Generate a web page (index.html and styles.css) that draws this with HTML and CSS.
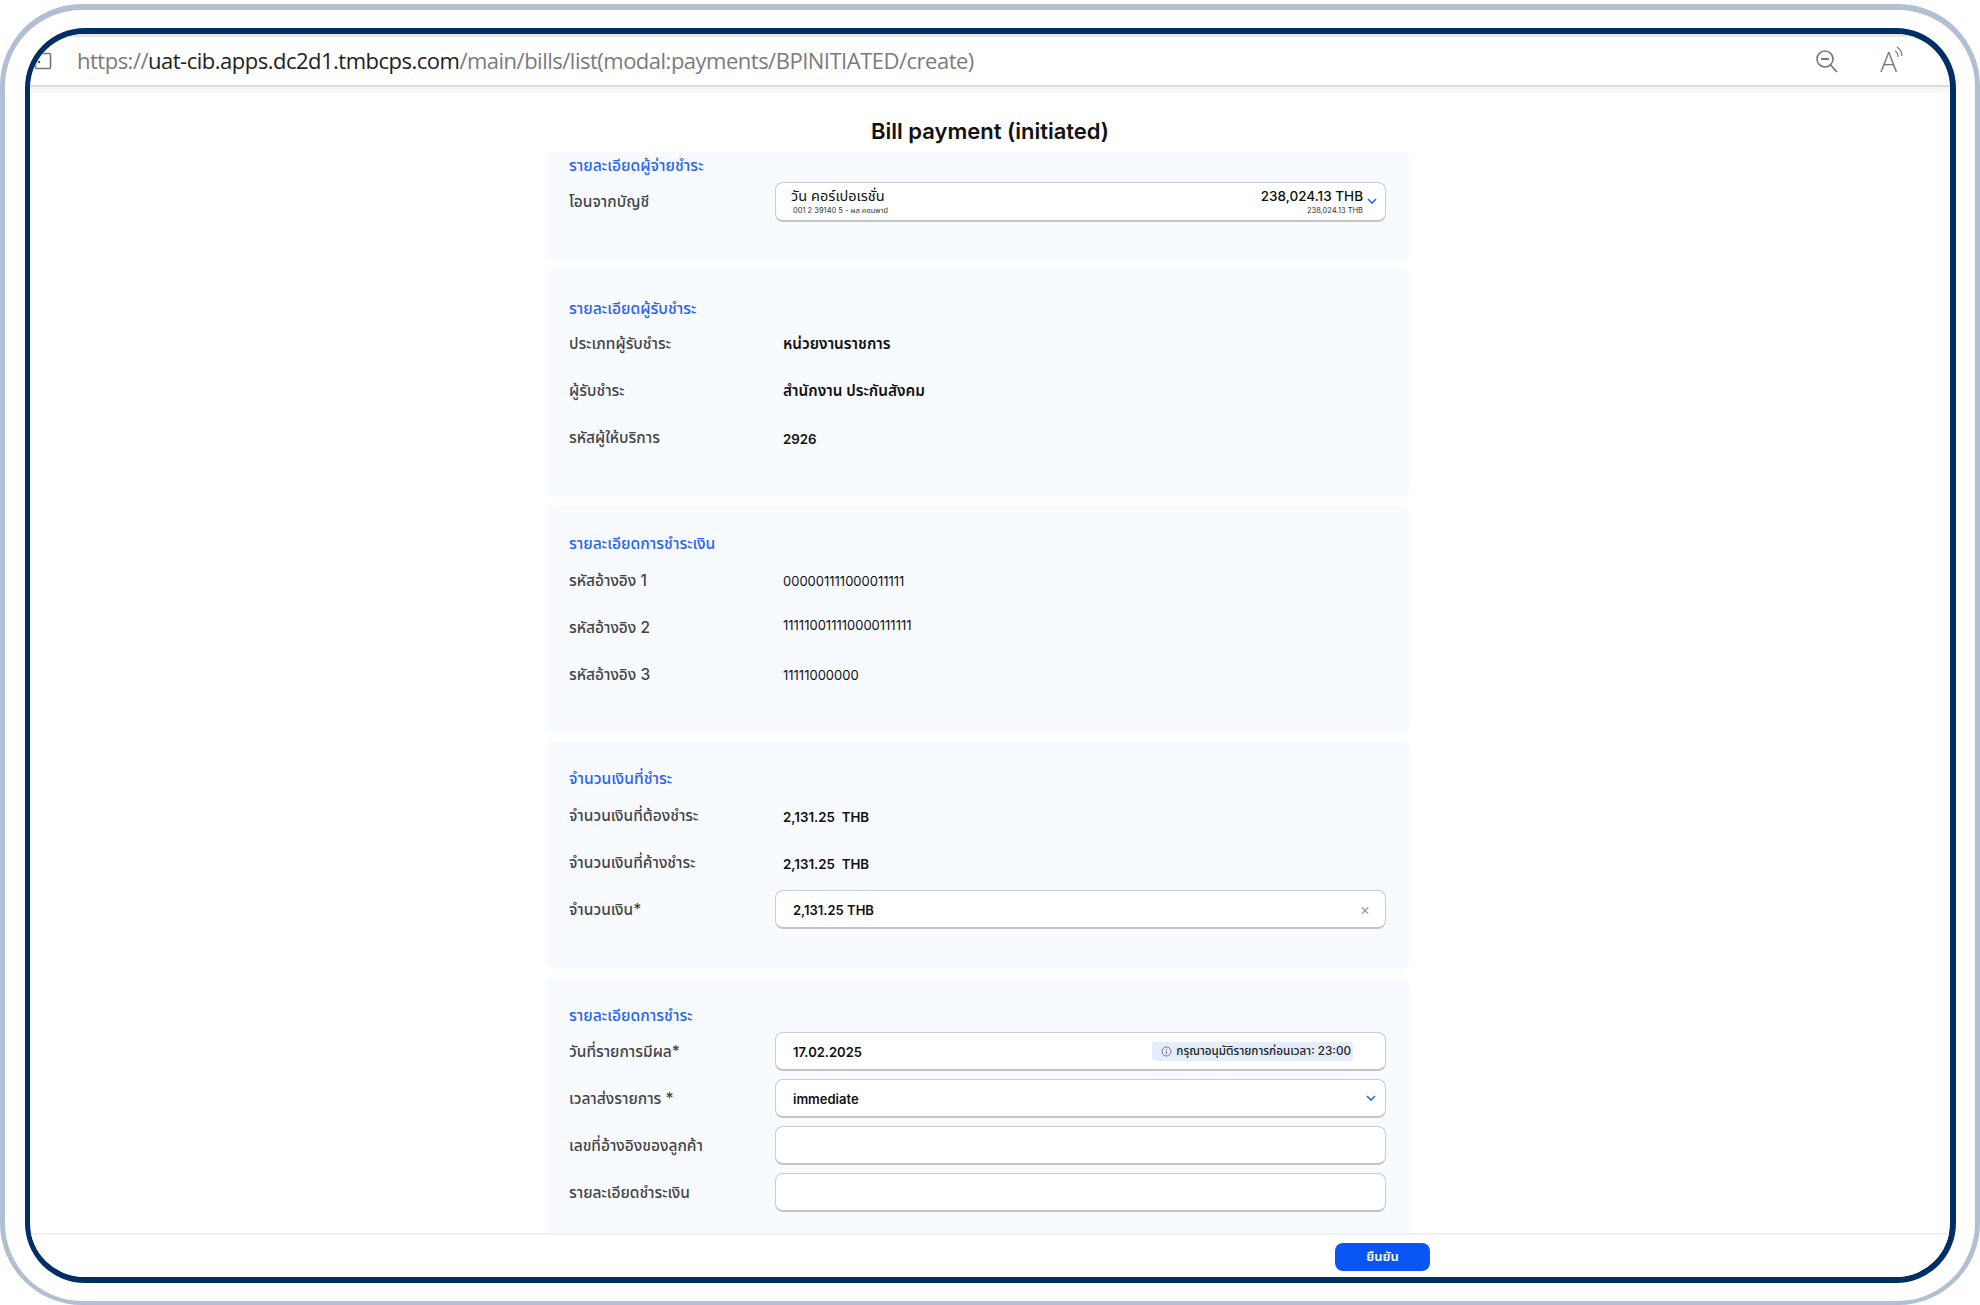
FILE: index.html
```html
<!DOCTYPE html>
<html lang="th">
<head>
    <meta charset="UTF-8">
    <meta name="viewport" content="width=device-width, initial-scale=1.0">
    <title>Bill payment (initiated)</title>
    <link rel="stylesheet" href="styles.css">
</head>
<body>
    <div class="frame">
        <div class="window">
            <!-- Address bar -->
            <header class="toolbar">
                <svg class="page-icon" width="20" height="20" viewBox="0 0 20 20">
                    <path d="M7 2.5H16.5a1 1 0 0 1 1 1V16.5a1 1 0 0 1-1 1H3.5a1 1 0 0 1-1-1V7z" fill="none" stroke="#777" stroke-width="1.6"/>
                    <circle cx="6" cy="11" r="1.3" fill="#555"/>
                </svg>
                <div class="url">https://<span class="url-host">uat-cib.apps.dc2d1.tmbcps.com</span>/main/bills/list(modal:payments/BPINITIATED/create)</div>
                <svg class="zoom-icon" width="26" height="24" viewBox="0 0 26 24">
                    <circle cx="11" cy="10" r="8" fill="none" stroke="#777" stroke-width="1.6"/>
                    <path d="M7 10H15" stroke="#777" stroke-width="1.8"/>
                    <path d="M16.5 16L23 23" stroke="#777" stroke-width="1.8"/>
                </svg>
                <div class="read-aloud">
                    <span class="read-letter">A</span>
                    <svg class="read-waves" width="10" height="16" viewBox="0 0 10 16">
                        <path d="M1 5C3 6 4 8 4 11" fill="none" stroke="#777" stroke-width="1.2"/>
                        <path d="M3 1C6 3 8 6 8 10" fill="none" stroke="#777" stroke-width="1.2"/>
                    </svg>
                </div>
            </header>
            <div class="toolbar-gap"></div>

            <main class="main">
                <h1 class="page-title">Bill payment (initiated)</h1>

                <!-- Payer -->
                <section class="card card-payer">
                    <h2 class="card-title">รายละเอียดผู้จ่ายชำระ</h2>
                    <div class="row">
                        <div class="label">โอนจากบัญชี</div>
                        <div class="field field-account">
                            <div class="account-left">
                                <div class="account-name">วัน คอร์เปอเรชั่น</div>
                                <div class="account-small account-no">001 2 39140 5 - ผส คอมพานี</div>
                            </div>
                            <div class="account-right">
                                <div class="account-amount">238,024.13 THB</div>
                                <div class="account-small">238,024.13 THB</div>
                            </div>
                            <svg class="chevron" width="10" height="7" viewBox="0 0 10 7"><path d="M1 1L5 5L9 1" fill="none" stroke="#2b6be8" stroke-width="1.6"/></svg>
                        </div>
                    </div>
                </section>

                <!-- Payee -->
                <section class="card card-payee">
                    <h2 class="card-title">รายละเอียดผู้รับชำระ</h2>
                    <div class="row">
                        <div class="label">ประเภทผู้รับชำระ</div>
                        <div class="value value-strong value-thai">หน่วยงานราชการ</div>
                    </div>
                    <div class="row">
                        <div class="label">ผู้รับชำระ</div>
                        <div class="value value-strong value-thai">สำนักงาน ประกันสังคม</div>
                    </div>
                    <div class="row">
                        <div class="label">รหัสผู้ให้บริการ</div>
                        <div class="value value-strong">2926</div>
                    </div>
                </section>

                <!-- Payment reference -->
                <section class="card card-refs">
                    <h2 class="card-title">รายละเอียดการชำระเงิน</h2>
                    <div class="row">
                        <div class="label">รหัสอ้างอิง 1</div>
                        <div class="value">000001111000011111</div>
                    </div>
                    <div class="row">
                        <div class="label">รหัสอ้างอิง 2</div>
                        <div class="value value-up">111110011110000111111</div>
                    </div>
                    <div class="row">
                        <div class="label">รหัสอ้างอิง 3</div>
                        <div class="value">11111000000</div>
                    </div>
                </section>

                <!-- Amount -->
                <section class="card card-amount">
                    <h2 class="card-title">จำนวนเงินที่ชำระ</h2>
                    <div class="row">
                        <div class="label">จำนวนเงินที่ต้องชำระ</div>
                        <div class="value value-strong">2,131.25&nbsp; THB</div>
                    </div>
                    <div class="row">
                        <div class="label">จำนวนเงินที่ค้างชำระ</div>
                        <div class="value value-strong">2,131.25&nbsp; THB</div>
                    </div>
                    <div class="row">
                        <div class="label">จำนวนเงิน*</div>
                        <div class="field">
                            <span class="field-text">2,131.25 THB</span>
                            <span class="clear">×</span>
                        </div>
                    </div>
                </section>

                <!-- Payment details -->
                <section class="card card-details">
                    <h2 class="card-title">รายละเอียดการชำระ</h2>
                    <div class="row">
                        <div class="label">วันที่รายการมีผล*</div>
                        <div class="field">
                            <span class="field-text">17.02.2025</span>
                            <span class="hint">
                                <svg width="11" height="11" viewBox="0 0 11 11">
                                    <circle cx="5.5" cy="5.5" r="4.5" fill="none" stroke="#777" stroke-width="1"/>
                                    <path d="M5.5 5V8M5.5 3V4" stroke="#777" stroke-width="1"/>
                                </svg>
                                กรุณาอนุมัติรายการก่อนเวลา: 23:00
                            </span>
                        </div>
                    </div>
                    <div class="row">
                        <div class="label">เวลาส่งรายการ *</div>
                        <div class="field">
                            <span class="field-text">immediate</span>
                            <svg class="chevron" width="10" height="7" viewBox="0 0 10 7"><path d="M1 1L5 5L9 1" fill="none" stroke="#2b6be8" stroke-width="1.6"/></svg>
                        </div>
                    </div>
                    <div class="row">
                        <div class="label">เลขที่อ้างอิงของลูกค้า</div>
                        <div class="field"></div>
                    </div>
                    <div class="row">
                        <div class="label">รายละเอียดชำระเงิน</div>
                        <div class="field"></div>
                    </div>
                </section>
            </main>

            <footer class="footer">
                <button class="btn-confirm" type="button">ยืนยัน</button>
            </footer>
        </div>
    </div>
</body>
</html>
```

FILE: styles.css
```css
/* Page */
html,
body {
    margin: 0;
    padding: 0;
    height: 1305px;
    overflow: hidden;
    background-color: #fff;
    font-family: 'Inter', 'Noto Sans Thai', 'Noto Sans', sans-serif;
}

/* Double rounded frame around the browser shot */
.frame {
    box-sizing: border-box;
    height: 1301px;
    margin-top: 4px;
    padding: 18px 19px 18px 20px;
    background: #fff;
    border: 5px solid #b0bfd2;
    border-top-width: 6px;
    border-bottom-width: 4px;
    border-radius: 82px;
}

.window {
    box-sizing: border-box;
    height: 100%;
    display: flex;
    flex-direction: column;
    background: #fff;
    border: 6px solid #002f66;
    border-left-width: 5px;
    border-radius: 60px;
    overflow: hidden;
}

/* Address bar */
.toolbar {
    box-sizing: border-box;
    height: 53px;
    flex-shrink: 0;
    display: flex;
    align-items: center;
    padding: 0 46px 0 3px;
    border-top: 3px solid #e6e6e6;
    border-bottom: 2px solid #dcdcdc;
}

.page-icon {
    flex-shrink: 0;
    margin-right: 24px;
}

.url {
    flex: 1;
    font-family: 'Open Sans', sans-serif;
    font-size: 22px;
    letter-spacing: -0.5px;
    color: #7b7b7b;
    white-space: nowrap;
    margin-top: -2px;
}

.url-host {
    color: #222;
}

.zoom-icon {
    margin-right: 40px;
}

.read-aloud {
    display: flex;
    align-items: flex-start;
    color: #777;
}

.read-letter {
    font-family: 'Open Sans', sans-serif;
    font-weight: 300;
    font-size: 28px;
    line-height: 30px;
}

.read-waves {
    margin-left: -3px;
}

.toolbar-gap {
    height: 6px;
    flex-shrink: 0;
    background: #f6f6f6;
}

/* Scrolling content, clipped by the footer */
.main {
    flex: 1;
    min-height: 0;
    overflow: hidden;
    padding-left: 516px;
}

.page-title {
    box-sizing: border-box;
    width: 864px;
    height: 59px;
    margin: 0;
    padding: 23px 0 0 24px;
    text-align: center;
    font-size: 22px;
    line-height: 30px;
    font-weight: 600;
    color: #111;
}

/* Cards */
.card {
    box-sizing: border-box;
    width: 864px;
    margin-bottom: 8px;
    padding: 0 24px 0 23px;
    background: #f7faff;
    border-radius: 8px;
}

.card-payer {
    height: 109px;
    margin-bottom: 7px;
    padding-top: 3px;
}

.card-payee {
    height: 229px;
    padding-top: 30px;
}

.card-refs {
    height: 228px;
    padding-top: 28px;
}

.card-amount {
    height: 228px;
    padding-top: 27px;
}

.card-details {
    height: 300px;
    padding-top: 28px;
}

.card-title {
    height: 22px;
    margin: 0;
    font-size: 15.7px;
    line-height: 22px;
    font-weight: 500;
    color: #2a62f0;
}

.card-refs .card-title,
.card-amount .card-title {
    margin-bottom: 2px;
}

.card-payer .card-title,
.card-details .card-title {
    margin-bottom: 1px;
}

.row {
    display: grid;
    grid-template-columns: 206px 1fr;
    align-items: center;
    height: 47px;
}

.label {
    padding-top: 2px;
    font-size: 15.5px;
    font-weight: 500;
    color: #444;
}

.value {
    padding-left: 8px;
    font-size: 13px;
    color: #111;
}

.value-strong {
    padding-top: 2px;
    font-size: 13.3px;
    font-weight: 600;
}

.value-thai {
    font-size: 15.3px;
}

.value-up {
    margin-top: -5px;
}

/* Inputs */
.field {
    box-sizing: border-box;
    height: 39px;
    display: flex;
    align-items: center;
    justify-content: space-between;
    padding: 0 9px 0 17px;
    background: #fff;
    border: 1px solid #ccc;
    border-bottom: 2px solid #c4c4c4;
    border-radius: 8px;
}

.field-text {
    padding-top: 1px;
    font-size: 13px;
    font-weight: 600;
    color: #111;
}

.clear {
    margin-right: 6px;
    font-size: 15px;
    color: #999;
}

.chevron {
    flex-shrink: 0;
}

.hint {
    display: flex;
    align-items: center;
    gap: 4px;
    height: 19px;
    margin-right: 23px;
    padding: 0 2px 0 9px;
    background: #e3edfb;
    border-radius: 4px;
    font-size: 11.7px;
    font-weight: 500;
    color: #222;
}

/* Account select */
.field-account {
    height: 40px;
    padding: 0 8px 0 15px;
}

.account-left {
    flex: 1;
}

.account-right {
    text-align: right;
    margin-right: 4px;
}

.account-name {
    font-size: 14.5px;
    line-height: 18px;
    color: #111;
}

.account-amount {
    font-size: 13.5px;
    line-height: 18px;
    font-weight: 500;
    color: #111;
}

.account-small {
    margin-top: 1px;
    font-size: 7.5px;
    line-height: 10px;
    color: #333;
}

.account-no {
    padding-left: 2px;
}

/* Footer */
.footer {
    box-sizing: border-box;
    height: 44px;
    flex-shrink: 0;
    display: flex;
    justify-content: flex-end;
    padding: 8px 520px 0 0;
    background: #fff;
    border-top: 2px solid #f0f0f0;
}

.btn-confirm {
    width: 95px;
    height: 28px;
    padding: 0;
    font-family: inherit;
    font-size: 13px;
    font-weight: 600;
    color: #fff;
    background-color: #0a55f5;
    border: none;
    border-radius: 8px;
}
```
